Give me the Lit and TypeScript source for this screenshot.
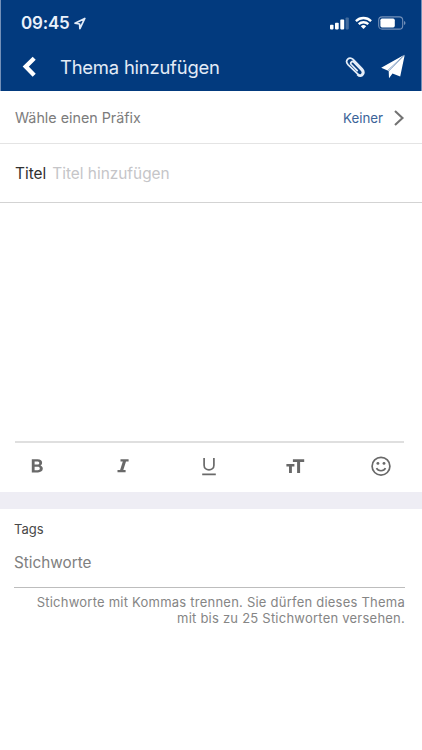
import { LitElement, html, css } from "lit";
import { customElement } from "lit/decorators.js";

@customElement("status-bar")
class StatusBar extends LitElement {
  static styles = css`
    :host { display: flex; height: 46px; align-items: center; justify-content: space-between; padding: 0 15px 0 20px; }
    .clock { display: flex; align-items: center; gap: 4px; font-size: 17px; font-weight: 600; color: #eaf1fb; letter-spacing: -0.2px; }
    svg { display: block; }
    .signals { display: flex; align-items: center; gap: 6px; }
  `;
  render() {
    return html`
      <div class="clock"><span>09:45</span>
        <svg width="12" height="13" viewBox="0 0 12 13"><path d="M10.8 1.4 1 6.2l4.6.8.3 4.6z" fill="none" stroke="#e3ecf8" stroke-width="1.7" stroke-linejoin="round"/></svg>
      </div>
      <div class="signals">
        <svg width="19" height="14" viewBox="0 0 19 14" fill="#fff"><rect x="0" y="8.8" width="3.5" height="4.6" rx=".8"/><rect x="5" y="6.8" width="3.7" height="6.6" rx=".8"/><rect x="10.3" y="3.6" width="3.9" height="9.8" rx=".8"/><rect x="15.6" y="1.4" width="3.2" height="12" rx=".8" opacity=".25"/></svg>
        <svg width="17" height="14" viewBox="0 0 17 14" fill="none" stroke="#fff" stroke-width="2.3"><path d="M.9 5.1a10.9 10.9 0 0 1 15.2 0"/><path d="M3.7 8.2a6.9 6.9 0 0 1 9.6 0"/><path d="M8.5 13 5.8 10.3a3.9 3.9 0 0 1 5.4 0z" fill="#fff" stroke="none"/></svg>
        <svg width="28" height="14" viewBox="0 0 28 14"><rect x=".7" y=".9" width="24" height="12.2" rx="3.4" fill="none" stroke="#7390b9" stroke-width="1.1"/><rect x="2.4" y="2.6" width="14.4" height="8.8" rx="1.6" fill="#fff"/><path d="M26 5v4q1.5-.5 1.5-2T26 5z" fill="#7390b9"/></svg>
      </div>`;
  }
}

@customElement("app-bar")
class AppBar extends LitElement {
  static styles = css`
    :host { display: flex; height: 45px; align-items: center; padding: 0 16px 4px 20px; box-sizing: border-box; }
    svg { display: block; }
    h1 { margin: 0 auto 0 23px; font-size: 18.4px; letter-spacing: -0.2px; font-weight: 400; color: #e3ebf6; line-height: 24px; white-space: nowrap; }
    .clip { margin-right: 16px; }
  `;
  render() {
    return html`
      <svg width="16" height="22" viewBox="0 0 16 22"><path d="M13.2 2.2 4.7 10.6l8.5 8.6" fill="none" stroke="#fff" stroke-width="4.3"/></svg>
      <h1>Thema hinzufügen</h1>
      <svg class="clip" width="20" height="22" viewBox="0 0 20 22" fill="none" stroke="#e5edf8" stroke-width="1.7" stroke-linecap="round" stroke-linejoin="round"><path d="m12.2 14.7-5.9-6.2c-1.6-1.8.7-4 2.4-2.3l7.7 8c2.9 3.1-.9 6.6-3.8 3.7L3 8.6C-.6 4.7 4.2-.4 8.1 3.4l9.2 9.5c1.7 1.8 1.8 4.1.8 5.6-1.3 2-3.7 2.4-5.5.5"/></svg>
      <svg width="24" height="25" viewBox="0 0 24 25"><path d="M23.4.8.2 13.8l6.3 2.7zM23.7.9 7.7 17.3l.3 6.9 3.5-4.8 7.7 3.2z" fill="#fff"/><path d="M6.5 16.5 23.4.8 7.7 17.3z" fill="#c5d3e6"/></svg>`;
  }
}

@customElement("format-bar")
class FormatBar extends LitElement {
  static styles = css`
    :host { display: flex; justify-content: space-between; align-items: center; height: 46px; margin: 0 18px 0 15px; padding: 0 13px 3px 12px; border-top: 2px solid #dfdfdf; box-sizing: content-box; }
    svg { display: block; fill: #696969; }
    .line { fill: none; stroke: #696969; stroke-width: 1.7; }
  `;
  render() {
    return html`
      <svg width="20" height="20" viewBox="0 0 20 20"><path fill-rule="evenodd" d="M4.8 3.3h5.8c3 0 4.5 1.3 4.5 3.4 0 1.4-.7 2.4-1.8 2.8 1.6.5 2.5 1.6 2.5 3.1 0 2.5-1.9 3.8-4.8 3.8H4.8zM7.6 5.6v3h2.6c1.4 0 2.1-.5 2.1-1.5s-.7-1.5-2.1-1.5zm0 5.2v3.4h3c1.5 0 2.2-.6 2.2-1.7s-.8-1.7-2.2-1.7z"/></svg>
      <svg width="20" height="20" viewBox="0 0 20 20"><path d="M7.5 3.2h8.1v2.3h-2.6l-2.7 8.5h2.3v2.3H4.5v-2.3h2.6l2.7-8.5H7.5z"/></svg>
      <svg width="20" height="20" viewBox="0 0 20 20"><path class="line" d="M5.1 2v7.2c0 6.2 9.8 6.2 9.8 0V2M3.2 18.3h13.6"/></svg>
      <svg width="20" height="20" viewBox="0 0 20 20"><path d="M7.9 3.2h11.3v2.9h-4.1v11h-3v-11H7.9zM1.4 7.9h8v2.6H6.9v6.6H4v-6.6H1.4z"/></svg>
      <svg width="20" height="20" viewBox="0 0 20 20"><circle class="line" cx="10" cy="10.2" r="8.9"/><circle cx="6.9" cy="7.4" r="1.45"/><circle cx="13" cy="7.4" r="1.45"/><path class="line" d="M5.5 12.2c1.6 3.4 7.4 3.4 9 0"/></svg>`;
  }
}

@customElement("app-root")
class AppRoot extends LitElement {
  static styles = css`
    :host { display: flex; flex-direction: column; height: 750px; overflow: hidden; background: #fff; font-family: Inter, "Liberation Sans", sans-serif; box-sizing: border-box; }
    header { height: 91px; background: #023a7e; border: solid #7390b9; border-width: 0 1px; box-sizing: border-box; flex: none; margin-bottom: 1px; }
    .row { display: flex; align-items: center; box-sizing: border-box; padding: 0 17px 0 15px; flex: none; white-space: nowrap; }
    .prefix { height: 52px; border-bottom: 1px solid #e4e4e4; font-size: 14.3px; color: #7c7c7c; }
    .value { margin: 0 10px 0 auto; font-size: 13.3px; color: #3b6398; }
    .title { height: 59px; border-bottom: 1px solid #d3d3d3; gap: 6px; font-size: 15.4px; color: #303030; padding-top: 1px; }
    .hint { color: #c5c5c8; }
    .editor { height: 238px; flex: none; }
    .band { height: 17px; background: #eeedf4; flex: none; }
    .tags { padding: 0 17px 0 14px; }
    .label { padding-top: 11px; font-size: 13px; line-height: 18px; color: #484848; }
    .field { padding-top: 15px; height: 34px; font-size: 15.3px; line-height: 20px; color: #808080; border-bottom: 1px solid #bdbdbd; }
    .note { padding-top: 6px; text-align: right; font-size: 13px; letter-spacing: 0.23px; line-height: 16px; color: #858585; white-space: nowrap; }
  `;
  render() {
    return html`
      <header><status-bar></status-bar><app-bar></app-bar></header>
      <div class="row prefix"><span>Wähle einen Präfix</span><span class="value">Keiner</span>
        <svg width="12" height="18" viewBox="0 0 12 18"><path d="m2 2 7.5 7L2 16" fill="none" stroke="#737373" stroke-width="2.1"/></svg>
      </div>
      <div class="row title"><span>Titel</span><span class="hint">Titel hinzufügen</span></div>
      <div class="editor"></div>
      <format-bar></format-bar>
      <div class="band"></div>
      <section class="tags">
        <div class="label">Tags</div>
        <div class="field">Stichworte</div>
        <div class="note">Stichworte mit Kommas trennen. Sie dürfen dieses Thema<br>mit bis zu 25 Stichworten versehen.</div>
      </section>`;
  }
}
